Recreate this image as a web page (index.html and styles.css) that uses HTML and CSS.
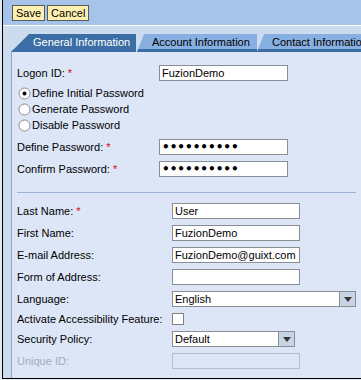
FILE: index.html
```html
<!DOCTYPE html>
<html>
<head>
    <title>User Maintenance</title>
    <link rel="stylesheet" href="styles.css">
</head>
<body>
    <div class="window">
        <div class="toolbar">
            <button>Save</button>
            <button>Cancel</button>
        </div>
        <div class="workarea">
            <div class="tabs">
                <div class="tab active">General Information</div>
                <div class="tab second">Account Information</div>
                <div class="tab third">Contact Information</div>
            </div>
            <div class="panel">
                <div class="form">
                    <label>Logon ID: <span class="req">*</span></label>
                    <input type="text" value="FuzionDemo">
                </div>

                <div class="radios">
                    <label class="radio">
                        <svg width="13" height="13" viewBox="0 0 13 13"><circle cx="6.5" cy="6.5" r="5.5" fill="#fff" stroke="#8a8a8a"/><circle cx="6.5" cy="6.5" r="2" fill="#000"/></svg>
                        Define Initial Password
                    </label>
                    <label class="radio">
                        <svg width="13" height="13" viewBox="0 0 13 13"><circle cx="6.5" cy="6.5" r="5.5" fill="#fff" stroke="#8a8a8a"/></svg>
                        Generate Password
                    </label>
                    <label class="radio">
                        <svg width="13" height="13" viewBox="0 0 13 13"><circle cx="6.5" cy="6.5" r="5.5" fill="#fff" stroke="#8a8a8a"/></svg>
                        Disable Password
                    </label>
                </div>

                <div class="form">
                    <label>Define Password: <span class="req">*</span></label>
                    <input type="password" value="abcdefghij">
                    <label>Confirm Password: <span class="req">*</span></label>
                    <input type="password" value="abcdefghij">
                </div>

                <hr>

                <div class="form details">
                    <label>Last Name: <span class="req">*</span></label>
                    <input type="text" value="User">
                    <label>First Name:</label>
                    <input type="text" value="FuzionDemo">
                    <label>E-mail Address:</label>
                    <input type="text" value="FuzionDemo@guixt.com">
                    <label>Form of Address:</label>
                    <input type="text" value="">
                    <label>Language:</label>
                    <div class="combo wide">
                        <span>English</span>
                        <b><svg width="8" height="5" viewBox="0 0 8 5"><path d="M0 0H8L4 5Z" fill="#3a3733"/></svg></b>
                    </div>
                    <label>Activate Accessibility Feature:</label>
                    <span class="check"></span>
                    <label>Security Policy:</label>
                    <div class="combo">
                        <span>Default</span>
                        <b><svg width="8" height="5" viewBox="0 0 8 5"><path d="M0 0H8L4 5Z" fill="#3a3733"/></svg></b>
                    </div>
                    <label class="muted">Unique ID:</label>
                    <input type="text" value="" disabled>
                </div>
            </div>
        </div>
    </div>
</body>
</html>
```

FILE: styles.css
```css
body {
    margin: 0;
    background-color: #e3eaf3;
    font-family: "Liberation Sans", Arial, sans-serif;
    font-size: 11px;
    color: #000;
}
.window {
    margin-left: 2px;
    height: 378px;
    border-left: 1px solid #000;
    border-bottom: 1px solid #000;
    display: flex;
    flex-direction: column;
    overflow: hidden;
}
.toolbar {
    box-sizing: border-box;
    height: 26px;
    padding: 5px 0 0 9px;
    background-color: #a6c4e9;
    border-bottom: 1px solid #fff;
    display: flex;
    align-items: flex-start;
    gap: 2px;
}
button {
    height: 16px;
    padding: 0 3px;
    font-family: "Liberation Sans", Arial, sans-serif;
    font-size: 11px;
    line-height: 14px;
    color: #000;
    background-color: #fdefb2;
    border: 1px solid #5a5a5a;
    border-radius: 0;
}
.workarea {
    flex: 1;
    min-height: 0;
    padding: 8px 0 0 8px;
    background-color: #cddbef;
    display: flex;
    flex-direction: column;
}
.tabs {
    display: flex;
    height: 18px;
}
.tab {
    flex-shrink: 0;
    box-sizing: border-box;
    line-height: 17px;
    white-space: nowrap;
    background-color: #88afe1;
    box-shadow: inset 0 -3px 0 #3b6ea5;
    clip-path: polygon(7px 0, 100% 0, 100% 100%, 0 100%);
}
.tab.active {
    width: 125px;
    padding-left: 22px;
    color: #fff;
    background-color: #3b6ea5;
    clip-path: polygon(18px 0, 100% 0, 100% 100%, 0 100%);
}
.tab.second {
    width: 120px;
    margin-left: 1px;
    padding-left: 15px;
}
.tab.third {
    width: 130px;
    padding-left: 15px;
}
.panel {
    flex: 1;
    padding: 13px 0 0 5px;
    background-color: #dde6f7;
    border-left: 1px solid #8da8d0;
}
.form {
    display: grid;
    grid-template-columns: 142px 129px;
    row-gap: 6px;
    align-items: center;
}
.form.details {
    grid-template-columns: 155px auto;
}
.req {
    color: #e00000;
}
.muted {
    color: #a3abb8;
}
input {
    box-sizing: border-box;
    width: 129px;
    height: 16px;
    margin: 0;
    padding: 0 2px;
    font-family: "Liberation Sans", Arial, sans-serif;
    font-size: 11px;
    color: #000;
    background-color: #fff;
    border: 1px solid #8a8e94;
    border-radius: 0;
    outline: none;
}
.details input {
    width: 128px;
}
input[type="password"] {
    font-family: "DejaVu Sans", sans-serif;
    font-size: 12px;
    font-weight: bold;
}
input:disabled {
    background-color: #dde6f7;
    border-color: #b4bccb;
}
.radios {
    margin: 4px 0 6px;
}
.radio {
    height: 16px;
    display: flex;
    align-items: center;
    gap: 1px;
}
.radio svg {
    margin-left: 1px;
}
hr {
    margin: 15px 5px 10px 0;
    border: 0;
    border-top: 1px solid #9fb3d3;
}
.check {
    box-sizing: border-box;
    width: 12px;
    height: 12px;
    background-color: #fff;
    border: 1px solid #808080;
}
.combo {
    box-sizing: border-box;
    width: 123px;
    height: 16px;
    display: flex;
    background-color: #fff;
    border: 1px solid #8a8e94;
}
.combo.wide {
    width: 184px;
}
.combo span {
    flex: 1;
    padding-left: 2px;
    line-height: 14px;
}
.combo b {
    width: 15px;
    background-color: #c6d4e5;
    border-left: 1px solid #8a8e94;
    display: flex;
    align-items: center;
    justify-content: center;
}
```
